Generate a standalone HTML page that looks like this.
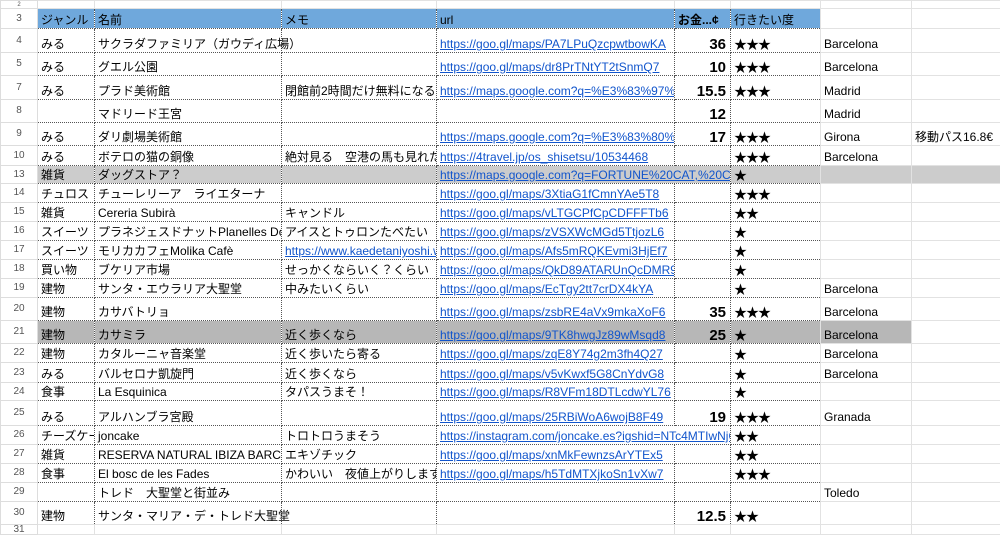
<!DOCTYPE html>
<html><head><meta charset="utf-8"><style>
body{margin:0;width:1000px;height:534px;overflow:hidden;background:#fff;font-family:"Liberation Sans","Noto Sans CJK JP",sans-serif;font-size:12px;color:#000}
table{border-collapse:collapse;table-layout:fixed;position:absolute;left:0;top:0;width:1000px}
td{padding:0 3px 1px 3px;vertical-align:bottom;white-space:nowrap;overflow:hidden;border:1px solid #e2e2e2;line-height:13px}
td.d{border:1px dotted #555}
td.rh{color:#555;font-size:10px;line-height:8px;text-align:center;vertical-align:middle;padding:0;border-color:#ddd;background:#fff}
td.ov{overflow:visible}
.hd td.d{background:#6fa8dc}
a{color:#1155cc;text-decoration:underline}
.n{text-align:right;font-weight:bold;font-size:15px;padding-right:4px}
.s{font-size:13px;letter-spacing:-1px}
tr.g1 td:not(.rh){background:#cccccc}
tr.g2 td.c{background:#b7b7b7}
</style></head><body>
<table>
<colgroup><col style="width:37px"><col style="width:57px"><col style="width:187px"><col style="width:155px"><col style="width:238px"><col style="width:56px"><col style="width:90px"><col style="width:91px"><col style="width:89px"></colgroup>
<tr style="height:8px"><td class="rh" style="font-size:6px;line-height:6px">2</td><td></td><td></td><td></td><td></td><td></td><td></td><td></td><td></td></tr>
<tr class="hd" style="height:20px"><td class="rh">3</td><td class="d">ジャンル</td><td class="d">名前</td><td class="d">メモ</td><td class="d">url</td><td class="d" style="font-weight:bold">お金...¢</td><td class="d">行きたい度</td><td></td><td></td></tr>
<tr style="height:24px"><td class="rh">4</td><td class="d">みる</td><td class="d ov">サクラダファミリア（ガウディ広場）</td><td class="d"></td><td class="d"><a>https://goo.gl/maps/PA7LPuQzcpwtbowKA</a></td><td class="d n">36</td><td class="d s">★★★</td><td>Barcelona</td><td></td></tr>
<tr style="height:23px"><td class="rh">5</td><td class="d">みる</td><td class="d">グエル公園</td><td class="d"></td><td class="d"><a>https://goo.gl/maps/dr8PrTNtYT2tSnmQ7</a></td><td class="d n">10</td><td class="d s">★★★</td><td>Barcelona</td><td></td></tr>
<tr style="height:24px"><td class="rh">7</td><td class="d">みる</td><td class="d">プラド美術館</td><td class="d">閉館前2時間だけ無料になる</td><td class="d"><a>https://maps.google.com?q=%E3%83%97%E3%83%A9</a></td><td class="d n">15.5</td><td class="d s">★★★</td><td>Madrid</td><td></td></tr>
<tr style="height:23px"><td class="rh">8</td><td class="d"></td><td class="d">マドリード王宮</td><td class="d"></td><td class="d"></td><td class="d n">12</td><td class="d s"></td><td>Madrid</td><td></td></tr>
<tr style="height:23px"><td class="rh">9</td><td class="d">みる</td><td class="d">ダリ劇場美術館</td><td class="d"></td><td class="d"><a>https://maps.google.com?q=%E3%83%80%E3%83%AA</a></td><td class="d n">17</td><td class="d s">★★★</td><td>Girona</td><td>移動パス16.8€</td></tr>
<tr style="height:20px"><td class="rh">10</td><td class="d">みる</td><td class="d">ボテロの猫の銅像</td><td class="d">絶対見る　空港の馬も見れたら</td><td class="d"><a>https://4travel.jp/os_shisetsu/10534468</a></td><td class="d n"></td><td class="d s">★★★</td><td>Barcelona</td><td></td></tr>
<tr class="g1" style="height:18px"><td class="rh">13</td><td class="d">雑貨</td><td class="d">ダッグストア？</td><td class="d"></td><td class="d" colspan="2"><a>https://maps.google.com?q=FORTUNE%20CAT,%20C</a></td><td class="d s">★</td><td></td><td></td></tr>
<tr style="height:19px"><td class="rh">14</td><td class="d">チュロス</td><td class="d">チューレリーア　ライエターナ</td><td class="d"></td><td class="d"><a>https://goo.gl/maps/3XtiaG1fCmnYAe5T8</a></td><td class="d n"></td><td class="d s">★★★</td><td></td><td></td></tr>
<tr style="height:19px"><td class="rh">15</td><td class="d">雑貨</td><td class="d">Cereria Subirà</td><td class="d">キャンドル</td><td class="d"><a>https://goo.gl/maps/vLTGCPfCpCDFFFTb6</a></td><td class="d n"></td><td class="d s">★★</td><td></td><td></td></tr>
<tr style="height:19px"><td class="rh">16</td><td class="d">スイーツ</td><td class="d">プラネジェスドナットPlanelles Donat</td><td class="d">アイスとトゥロンたべたい</td><td class="d"><a>https://goo.gl/maps/zVSXWcMGd5TtjozL6</a></td><td class="d n"></td><td class="d s">★</td><td></td><td></td></tr>
<tr style="height:19px"><td class="rh">17</td><td class="d">スイーツ</td><td class="d">モリカカフェMolika Cafè</td><td class="d"><a>https://www.kaedetaniyoshi.wor</a></td><td class="d"><a>https://goo.gl/maps/Afs5mRQKEvmi3HjEf7</a></td><td class="d n"></td><td class="d s">★</td><td></td><td></td></tr>
<tr style="height:19px"><td class="rh">18</td><td class="d">買い物</td><td class="d">ブケリア市場</td><td class="d">せっかくならいく？くらい</td><td class="d"><a>https://goo.gl/maps/QkD89ATARUnQcDMR9</a></td><td class="d n"></td><td class="d s">★</td><td></td><td></td></tr>
<tr style="height:19px"><td class="rh">19</td><td class="d">建物</td><td class="d">サンタ・エウラリア大聖堂</td><td class="d">中みたいくらい</td><td class="d"><a>https://goo.gl/maps/EcTgy2tt7crDX4kYA</a></td><td class="d n"></td><td class="d s">★</td><td>Barcelona</td><td></td></tr>
<tr style="height:23px"><td class="rh">20</td><td class="d">建物</td><td class="d">カサバトリョ</td><td class="d"></td><td class="d"><a>https://goo.gl/maps/zsbRE4aVx9mkaXoF6</a></td><td class="d n">35</td><td class="d s">★★★</td><td>Barcelona</td><td></td></tr>
<tr class="g2" style="height:23px"><td class="rh">21</td><td class="d c">建物</td><td class="d c">カサミラ</td><td class="d c">近く歩くなら</td><td class="d c"><a>https://goo.gl/maps/9TK8hwgJz89wMsqd8</a></td><td class="d n c">25</td><td class="d s c">★</td><td class="c">Barcelona</td><td></td></tr>
<tr style="height:19px"><td class="rh">22</td><td class="d">建物</td><td class="d">カタルーニャ音楽堂</td><td class="d">近く歩いたら寄る</td><td class="d"><a>https://goo.gl/maps/zqE8Y74g2m3fh4Q27</a></td><td class="d n"></td><td class="d s">★</td><td>Barcelona</td><td></td></tr>
<tr style="height:20px"><td class="rh">23</td><td class="d">みる</td><td class="d">バルセロナ凱旋門</td><td class="d">近く歩くなら</td><td class="d"><a>https://goo.gl/maps/v5vKwxf5G8CnYdvG8</a></td><td class="d n"></td><td class="d s">★</td><td>Barcelona</td><td></td></tr>
<tr style="height:18px"><td class="rh">24</td><td class="d">食事</td><td class="d">La Esquinica</td><td class="d">タパスうまそ！</td><td class="d"><a>https://goo.gl/maps/R8VFm18DTLcdwYL76</a></td><td class="d n"></td><td class="d s">★</td><td></td><td></td></tr>
<tr style="height:25px"><td class="rh">25</td><td class="d">みる</td><td class="d">アルハンブラ宮殿</td><td class="d"></td><td class="d"><a>https://goo.gl/maps/25RBiWoA6wojB8F49</a></td><td class="d n">19</td><td class="d s">★★★</td><td>Granada</td><td></td></tr>
<tr style="height:19px"><td class="rh">26</td><td class="d">チーズケーキ</td><td class="d">joncake</td><td class="d">トロトロうまそう</td><td class="d" colspan="2"><a>https://instagram.com/joncake.es?igshid=NTc4MTIwNjQ</a></td><td class="d s">★★</td><td></td><td></td></tr>
<tr style="height:19px"><td class="rh">27</td><td class="d">雑貨</td><td class="d">RESERVA NATURAL IBIZA BARCELONA</td><td class="d">エキゾチック</td><td class="d"><a>https://goo.gl/maps/xnMkFewnzsArYTEx5</a></td><td class="d n"></td><td class="d s">★★</td><td></td><td></td></tr>
<tr style="height:19px"><td class="rh">28</td><td class="d">食事</td><td class="d">El bosc de les Fades</td><td class="d">かわいい　夜値上がりします</td><td class="d"><a>https://goo.gl/maps/h5TdMTXjkoSn1vXw7</a></td><td class="d n"></td><td class="d s">★★★</td><td></td><td></td></tr>
<tr style="height:19px"><td class="rh">29</td><td class="d"></td><td class="d">トレド　大聖堂と街並み</td><td class="d"></td><td class="d"></td><td class="d n"></td><td class="d s"></td><td>Toledo</td><td></td></tr>
<tr style="height:23px"><td class="rh">30</td><td class="d">建物</td><td class="d ov">サンタ・マリア・デ・トレド大聖堂</td><td class="d"></td><td class="d"></td><td class="d n">12.5</td><td class="d s">★★</td><td></td><td></td></tr>
<tr style="height:10px"><td class="rh">31</td><td></td><td></td><td></td><td></td><td></td><td></td><td></td><td></td></tr>
</table>
</body></html>
